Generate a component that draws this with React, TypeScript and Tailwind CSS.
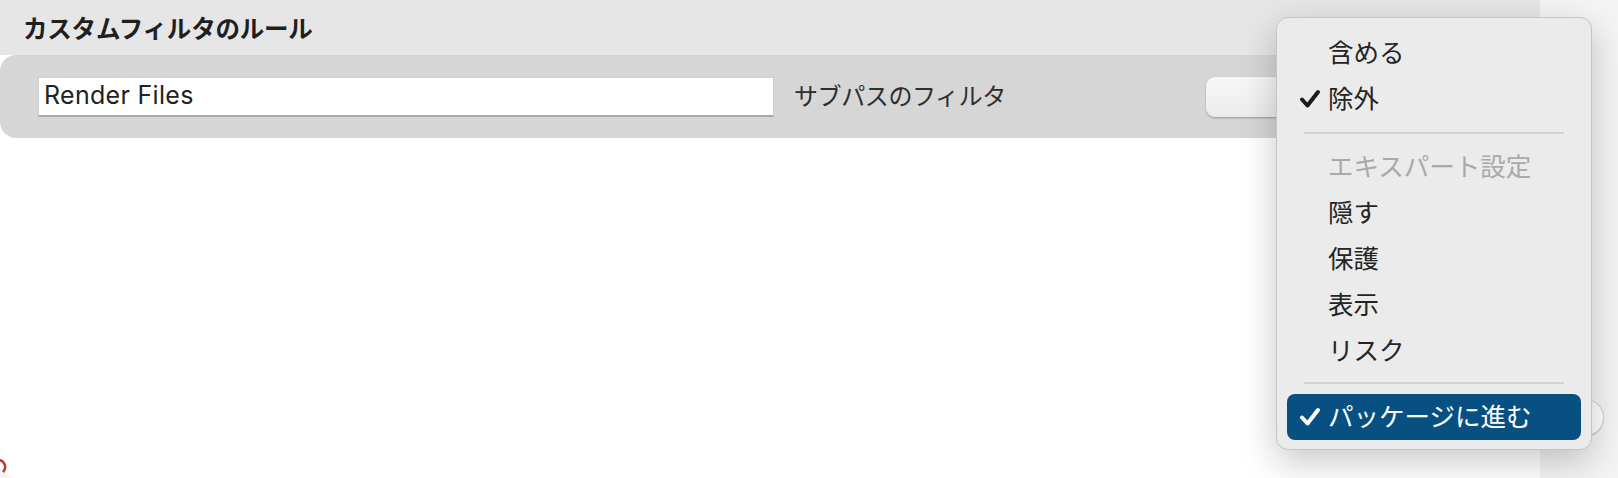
import React from "react";

function Check({ white = false }: { white?: boolean }) {
  return (
    <svg width="22" height="20" viewBox="0 0 22 20" className="shrink-0">
      <path
        d="M3 10.5 L8.5 16.5 L19 3"
        fill="none"
        stroke={white ? "#ffffff" : "#1a1a1a"}
        strokeWidth="4"
        strokeLinecap="round"
        strokeLinejoin="round"
      />
    </svg>
  );
}

function Item({
  label,
  checked = false,
  disabled = false,
}: {
  label: string;
  checked?: boolean;
  disabled?: boolean;
}) {
  return (
    <div className="h-[46px] mx-[10px] flex items-center pl-[12px]">
      <div className="w-[29px] flex items-center">{checked && <Check />}</div>
      <span
        className={
          disabled
            ? "text-[25.5px] leading-none text-[#a9a9a9]"
            : "text-[25.5px] leading-none text-[#242424]"
        }
      >
        {label}
      </span>
    </div>
  );
}

export default function App() {
  return (
    <div className="relative w-[1618px] h-[478px] overflow-hidden bg-[#f4f4f4] font-['Inter','Noto_Sans_CJK_JP',sans-serif]">
      <div className="flex h-full">
        {/* main window */}
        <div className="w-[1540px] h-full flex flex-col bg-white rounded-bl-[18px] relative">
          <div className="h-[55px] shrink-0 bg-[#e6e6e6] flex items-center pl-[23px] pt-[3px]">
            <span className="text-[24.5px] font-bold text-[#1f1f1f] tracking-[-0.2px]">
              カスタムフィルタのルール
            </span>
          </div>
          <div className="h-[83px] shrink-0 bg-[#d6d6d6] rounded-l-[16px] flex items-center pl-[38px]">
            <div className="w-[736px] h-[40px] bg-white border border-[#cfcfcf] border-b-[#a9a9a9] border-b-2 flex items-center pl-[5px]">
              <span className="text-[25px] text-[#222] tracking-[0.3px]">Render Files</span>
            </div>
            <span className="ml-[20px] text-[24px] text-[#2e2e2e] tracking-[-0.4px]">
              サブパスのフィルタ
            </span>
            <div className="ml-[200px] w-[240px] h-[40px] rounded-[9px] bg-gradient-to-b from-[#f7f7f7] to-[#ececec] shadow-[0_1px_2px_rgba(0,0,0,0.3)]" />
          </div>
          <div className="flex-1 bg-white rounded-bl-[18px]" />
        </div>
        {/* right strip */}
        <div className="flex-1 flex flex-col justify-end pb-[42px] pl-[27px]">
          <div className="w-[37px] h-[37px] rounded-full bg-white border border-[#cfcfcf] shadow-[0_1px_1px_rgba(0,0,0,0.15)]" />
        </div>
      </div>

      {/* red peek at bottom-left */}
      <svg className="absolute left-0 bottom-0" width="10" height="22" viewBox="0 0 10 22">
        <path d="M-2 4 A7 7 0 0 1 3 16" fill="none" stroke="#c0392b" strokeWidth="2.5" />
      </svg>

      {/* popup menu */}
      <div className="absolute left-[1276px] top-[17px] w-[316px] h-[433px] rounded-[12px] bg-[#ebebeb] border border-[#c4c4c4] shadow-[0_12px_36px_rgba(0,0,0,0.22)] pt-[12px]">
        <Item label="含める" />
        <Item label="除外" checked />
        <div className="mx-[27px] my-[10px] h-[2px] bg-[#d3d3d3]" />
        <Item label="エキスパート設定" disabled />
        <Item label="隠す" />
        <Item label="保護" />
        <Item label="表示" />
        <Item label="リスク" />
        <div className="mx-[27px] mt-[8px] mb-[10px] h-[2px] bg-[#d3d3d3]" />
        <div className="h-[46px] mx-[10px] rounded-[8px] bg-[#085082] flex items-center pl-[12px]">
          <div className="w-[29px] flex items-center">
            <Check white />
          </div>
          <span className="text-[25.5px] leading-none text-white">パッケージに進む</span>
        </div>
      </div>
    </div>
  );
}
